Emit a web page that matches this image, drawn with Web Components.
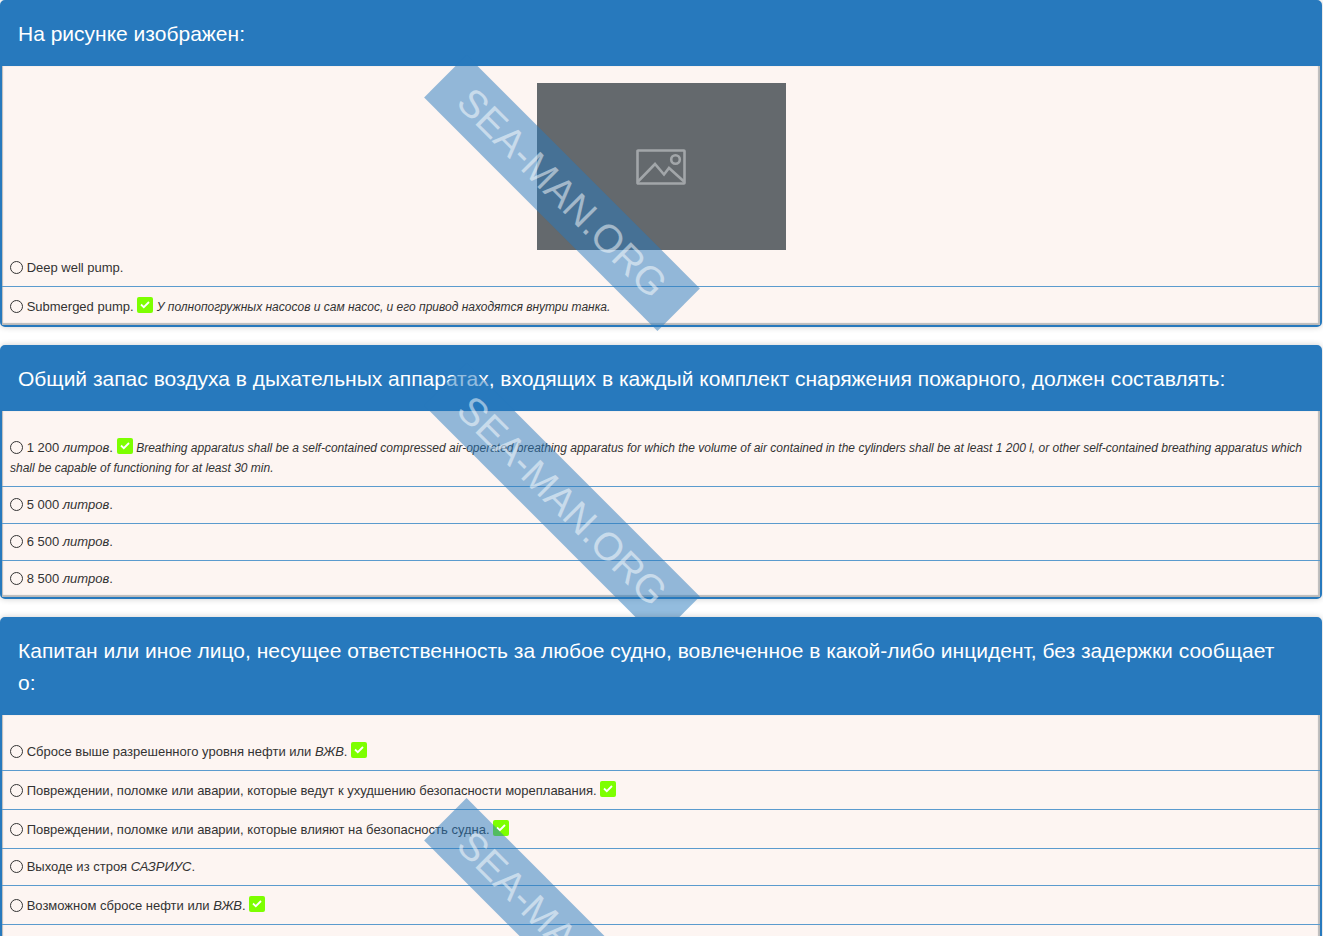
<!DOCTYPE html>
<html lang="ru">
<head>
<meta charset="utf-8">
<meta name="viewport" content="width=device-width, initial-scale=1">
<title>Sea-Man тесты</title>
<style>
body {
    margin: 0;
    background-color: white;
    font-family: "Liberation Sans", Arial, sans-serif;
    font-size: 13px;
    color: #333;
}
</style>
</head>
<body>
<quiz-page>
    <quiz-card>
        <span slot="title">На рисунке изображен:</span>
        <picture-box slot="picture"></picture-box>
        <answer-row name="q1">Deep well pump.</answer-row>
        <answer-row name="q1" correct>Submerged pump.<span slot="note">У полнопогружных насосов и сам насос, и его привод находятся внутри танка.</span></answer-row>
    </quiz-card>
    <quiz-card>
        <span slot="title">Общий запас воздуха в дыхательных аппаратах, входящих в каждый комплект снаряжения пожарного, должен составлять:</span>
        <answer-row name="q2" correct>1 200 <i>литров</i>.<span slot="note">Breathing apparatus shall be a self-contained compressed air-operated breathing apparatus for which the volume of air contained in the cylinders shall be at least 1 200 l, or other self-contained breathing apparatus which shall be capable of functioning for at least 30 min.</span></answer-row>
        <answer-row name="q2">5 000 <i>литров</i>.</answer-row>
        <answer-row name="q2">6 500 <i>литров</i>.</answer-row>
        <answer-row name="q2">8 500 <i>литров</i>.</answer-row>
    </quiz-card>
    <quiz-card class="long">
        <span slot="title">Капитан или иное лицо, несущее ответственность за любое судно, вовлеченное в какой-либо инцидент, без задержки сообщает о:</span>
        <answer-row name="q3" correct>Сбросе выше разрешенного уровня нефти или <i>ВЖВ</i>.</answer-row>
        <answer-row name="q3" correct>Повреждении, поломке или аварии, которые ведут к ухудшению безопасности мореплавания.</answer-row>
        <answer-row name="q3" correct>Повреждении, поломке или аварии, которые влияют на безопасность судна.</answer-row>
        <answer-row name="q3">Выходе из строя <i>САЗРИУС</i>.</answer-row>
        <answer-row name="q3" correct divided>Возможном сбросе нефти или <i>ВЖВ</i>.</answer-row>
    </quiz-card>
</quiz-page>

<script>
class QuizPage extends HTMLElement {
    constructor() {
        super();
        this.shadowDOM = this.attachShadow({mode: 'open'});
    }

    connectedCallback() {
        this.shadowDOM.innerHTML = `
            <style>
            :host {
                display: flex;
                flex-direction: column;
                gap: 18px;
                height: 100vh;
                overflow: hidden;
            }

            ::slotted(*) {
                flex: none;
            }

            ::slotted(.long) {
                --body-height: 448px;
            }
            </style>
            <slot></slot>
            `;
    }
}

class QuizCard extends HTMLElement {
    constructor() {
        super();
        this.shadowDOM = this.attachShadow({mode: 'open'});
    }

    connectedCallback() {
        this.render();
    }

    render() {
        this.shadowDOM.innerHTML = `
            <style>
            :host {
                display: block;
                position: relative;
                box-sizing: border-box;
                margin-right: 1px;
                border: 2px solid #2779bd;
                border-radius: 5px;
                background-color: #2779bd;
                box-shadow: 0 0 6px rgba(0, 0, 0, 0.2);
            }

            h2 {
                margin: 0;
                padding: 16px 32px 16px 16px;
                font-size: 21px;
                line-height: 32px;
                font-weight: normal;
                color: white;
            }

            .body {
                position: relative;
                box-sizing: border-box;
                min-height: var(--body-height, 0);
                padding-top: 17px;
                background-color: #fdf5f2;
                box-shadow: inset -2px -2px 1px #bbb, inset 1px 0 1px #bbb;
            }

            .watermark {
                position: absolute;
                top: 50%;
                left: 42%;
                width: 330px;
                margin: -33px 0 0 -159px;
                font-size: 39px;
                line-height: 60px;
                text-align: center;
                color: rgba(255, 255, 255, 0.5);
                background-color: rgba(39, 121, 189, 0.5);
                transform: rotate(45deg);
                pointer-events: none;
            }
            </style>
            <h2><slot name="title"></slot></h2>
            <div class="body">
                <slot name="picture"></slot>
                <slot></slot>
                <div class="watermark">SEA-MAN.ORG</div>
            </div>
            `;
    }
}

class PictureBox extends HTMLElement {
    constructor() {
        super();
        this.shadowDOM = this.attachShadow({mode: 'open'});
    }

    connectedCallback() {
        this.shadowDOM.innerHTML = `
            <style>
            :host {
                display: flex;
                justify-content: center;
                align-items: center;
                width: 249px;
                height: 167px;
                margin: 0 auto;
                background-color: #64696d;
            }
            </style>
            <svg width="50" height="36" viewBox="0 0 50 36" fill="none" stroke="#a2a6a9" stroke-width="2.6">
                <rect x="1.5" y="1.500" width="47" height="33" rx="0.5"/>
                <path d="M2 32.500L19 15L28 25.500L33 19L48 32.500"/>
                <circle cx="39.500" cy="10.500" r="4.300"/>
            </svg>
            `;
    }
}

class AnswerRow extends HTMLElement {
    constructor() {
        super();
        this.shadowDOM = this.attachShadow({mode: 'open'});
    }

    connectedCallback() {
        this.render();
    }

    render() {
        const check = `<svg width="16" height="16" viewBox="0 0 16 16">
                <rect width="16" height="16" rx="2" fill="#7dff00"/>
                <path d="M4 7.500L6.800 10.200L12 5" fill="none" stroke="white" stroke-width="1.800"/>
            </svg>`;

        this.shadowDOM.innerHTML = `
            <style>
            :host {
                display: block;
                padding: 8px;
                line-height: 20px;
                border-bottom: 1px solid #5b9bce;
            }

            :host(:last-of-type:not([divided])) {
                border-bottom: none;
            }

            input {
                appearance: none;
                box-sizing: border-box;
                width: 13px;
                height: 13px;
                margin: 0;
                border: 1px solid #333;
                border-radius: 50%;
                vertical-align: -2px;
            }

            svg {
                margin-top: 2px;
                vertical-align: -2px;
            }

            .note {
                font-size: 12px;
                font-style: italic;
            }
            </style>
            <input type="radio" id="answer" name="${this.getAttribute('name')}">
            <label for="answer"><slot></slot></label>
            ${this.hasAttribute('correct') ? check : ''}
            <span class="note"><slot name="note"></slot></span>
            `;
    }
}

customElements.define('quiz-page', QuizPage);
customElements.define('quiz-card', QuizCard);
customElements.define('picture-box', PictureBox);
customElements.define('answer-row', AnswerRow);
</script>
</body>
</html>
